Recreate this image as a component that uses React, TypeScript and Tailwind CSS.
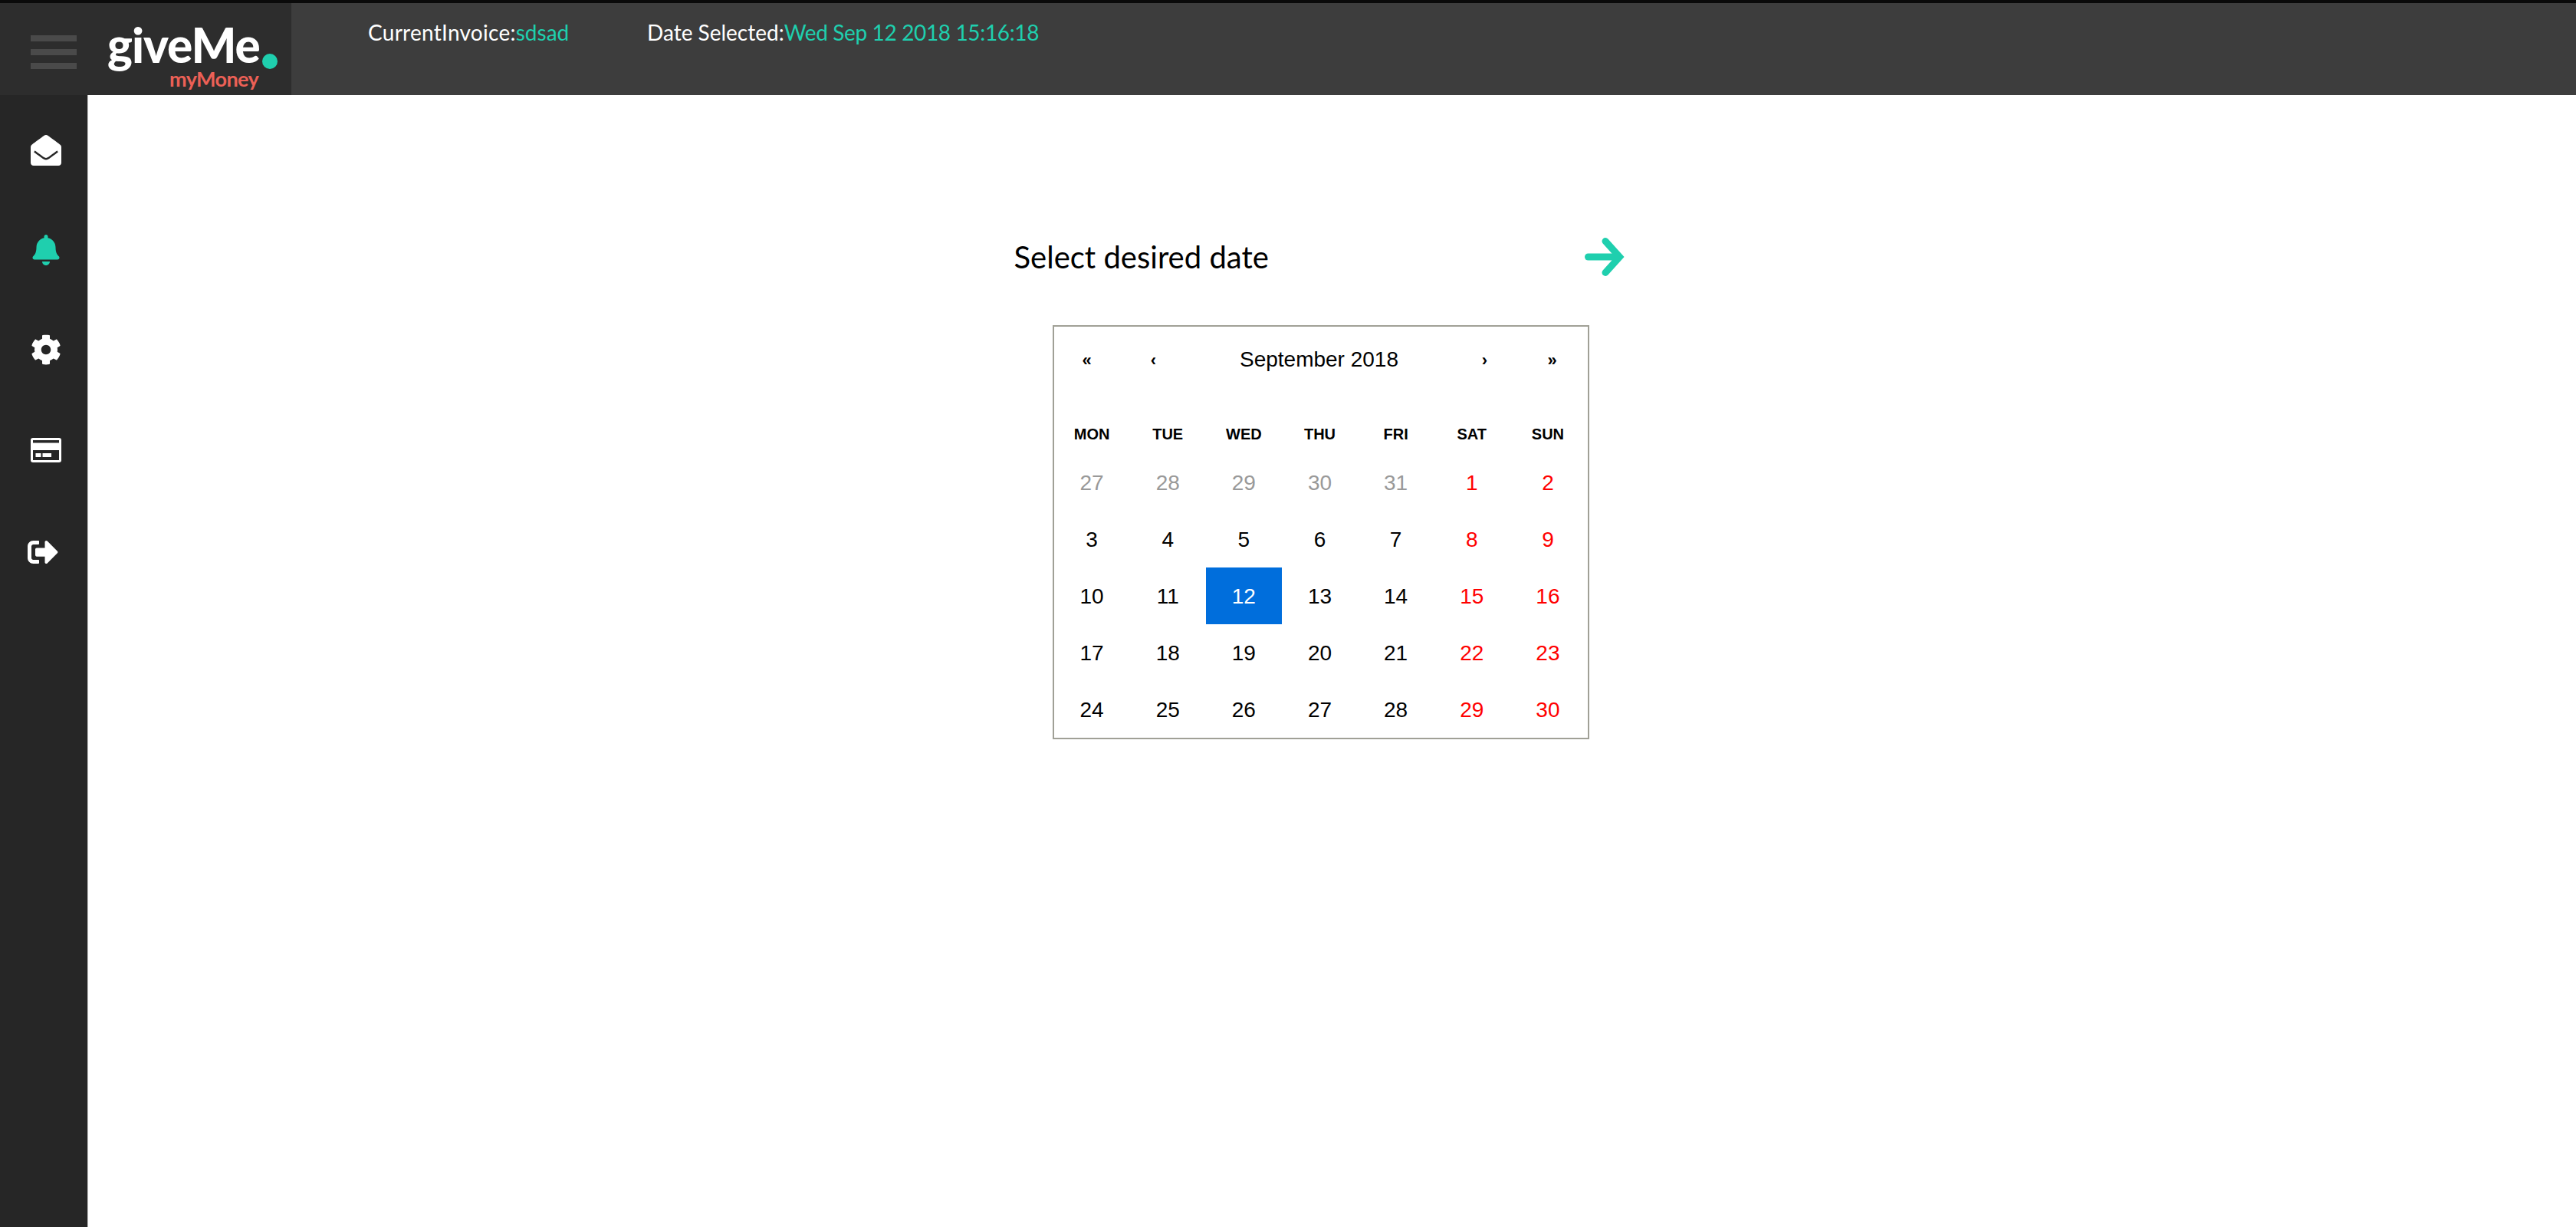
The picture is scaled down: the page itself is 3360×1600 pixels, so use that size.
import { FaBell, FaCog, FaEnvelopeOpen, FaSignOutAlt } from 'react-icons/fa';

const weekdays = ['MON', 'TUE', 'WED', 'THU', 'FRI', 'SAT', 'SUN'];

const days = [
  27, 28, 29, 30, 31, 1, 2,
  3, 4, 5, 6, 7, 8, 9,
  10, 11, 12, 13, 14, 15, 16,
  17, 18, 19, 20, 21, 22, 23,
  24, 25, 26, 27, 28, 29, 30,
];

function Header() {
  return (
    <header className="flex h-[124px] shrink-0 border-t-4 border-[#0a0a0a] bg-[#3d3d3d] font-['Lato',sans-serif]">
      {/* Brand */}
      <div className="flex w-[380px] shrink-0 bg-[#2d2d2d]">
        <div className="flex w-[140px] shrink-0 flex-col gap-[10px] pl-10 pt-[42px]">
          <span className="h-2 w-[60px] bg-[#4a4a4a]" />
          <span className="h-2 w-[60px] bg-[#4a4a4a]" />
          <span className="h-2 w-[60px] bg-[#4a4a4a]" />
        </div>
        <div className="relative flex h-[96px] items-start pt-[23px]">
          <span className="text-[62px] font-black leading-[62px] tracking-[-1px] text-white">giveMe</span>
          <span className="ml-[3px] mt-[43px] h-5 w-5 rounded-full bg-[#1fcfae]" />
          <span className="absolute left-[81px] top-[84px] text-[27px] font-bold leading-[29px] tracking-[-0.6px] text-[#ec6056]">myMoney</span>
        </div>
      </div>
      {/* Current selection */}
      <div className="flex pl-[100px] pt-[20px] text-[28px] leading-[36px] text-white">
        <div className="w-[364px]">
          <span className="tracking-[0.27px]">CurrentInvoice:</span>
          <span className="text-[#1fcfae]">sdsad</span>
        </div>
        <div>
          Date Selected:<span className="tracking-[-0.36px] text-[#1fcfae]">Wed Sep 12 2018 15:16:18</span>
        </div>
      </div>
    </header>
  );
}

function CardIcon() {
  return (
    <svg width="40" height="32" viewBox="0 0 40 32">
      <rect width="40" height="32" rx="3" fill="#ffffff" />
      <rect x="3" y="3" width="34" height="3.5" fill="#262626" />
      <rect x="3" y="16" width="34" height="13" fill="#262626" />
      <rect x="6.5" y="20" width="7" height="5" fill="#ffffff" />
      <rect x="15.5" y="20" width="11.5" height="5" fill="#ffffff" />
    </svg>
  );
}

function Sidebar() {
  return (
    <aside className="flex w-[115px] shrink-0 flex-col items-center border-r border-[#c8c8c8] bg-[#262626] pl-[6px] pt-[7px] text-white">
      <div className="flex h-[130px] items-center"><FaEnvelopeOpen size={40} /></div>
      <div className="flex h-[130px] items-center text-[#1fcfae]"><FaBell size={40} /></div>
      <div className="flex h-[130px] items-center"><FaCog size={40} /></div>
      <div className="flex h-[132px] items-center"><CardIcon /></div>
      <div className="mr-[8px] flex h-[134px] items-center"><FaSignOutAlt size={40} /></div>
    </aside>
  );
}

function Calendar() {
  return (
    <div className="ml-[50px] w-[700px] border-2 border-[#a0a096] bg-white font-['Liberation_Sans',Arial,sans-serif] text-black">
      {/* Navigation */}
      <div className="mb-[28px] flex h-[86px] items-center pr-[2px] text-center">
        <button className="w-[86px] text-[22px] font-bold">«</button>
        <button className="w-[88px] text-[22px] font-bold">‹</button>
        <div className="w-[344px] text-[28px]">September 2018</div>
        <button className="w-[88px] text-[22px] font-bold">›</button>
        <button className="w-[88px] text-[22px] font-bold">»</button>
      </div>

      {/* Weekdays */}
      <div className="grid h-[52px] grid-cols-7 items-center pr-[2px] text-center text-[20px] font-bold">
        {weekdays.map((day) => (
          <div key={day}>{day}</div>
        ))}
      </div>

      {/* Days */}
      <div className="grid grid-cols-7 pr-[2px] text-[28px]">
        {days.map((day, index) => {
          const isOtherMonth = index < 5;
          const isWeekend = index % 7 >= 5;
          const isSelected = index === 16;

          return (
            <div
              key={index}
              className={`flex h-[74px] items-center justify-center pt-[2px] ${
                isSelected
                  ? 'bg-[#006edc] text-white'
                  : isOtherMonth
                    ? 'text-[#999999]'
                    : isWeekend
                      ? 'text-[#ff0000]'
                      : 'text-black'
              }`}
            >
              {day}
            </div>
          );
        })}
      </div>
    </div>
  );
}

export default function App() {
  return (
    <div className="flex h-screen flex-col overflow-hidden bg-white">
      <Header />
      <div className="flex min-h-0 flex-1">
        <Sidebar />
        <main className="flex-1 pr-[30px] pt-[181px]">
          <div className="mx-auto w-[800px]">
            <div className="mb-[59px] flex h-[60px] items-center justify-between pr-[4px]">
              <h1 className="font-['Lato',sans-serif] text-[40px] font-normal text-black">Select desired date</h1>
              <svg width="52" height="52" viewBox="0 0 52 52" fill="none" stroke="#1fcfae" strokeWidth="9" strokeLinecap="round" strokeLinejoin="miter">
                <path d="M4.5 26 H44" />
                <path d="M27 5.5 L45.5 26 L27 46.5" />
              </svg>
            </div>
            <Calendar />
          </div>
        </main>
      </div>
    </div>
  );
}
